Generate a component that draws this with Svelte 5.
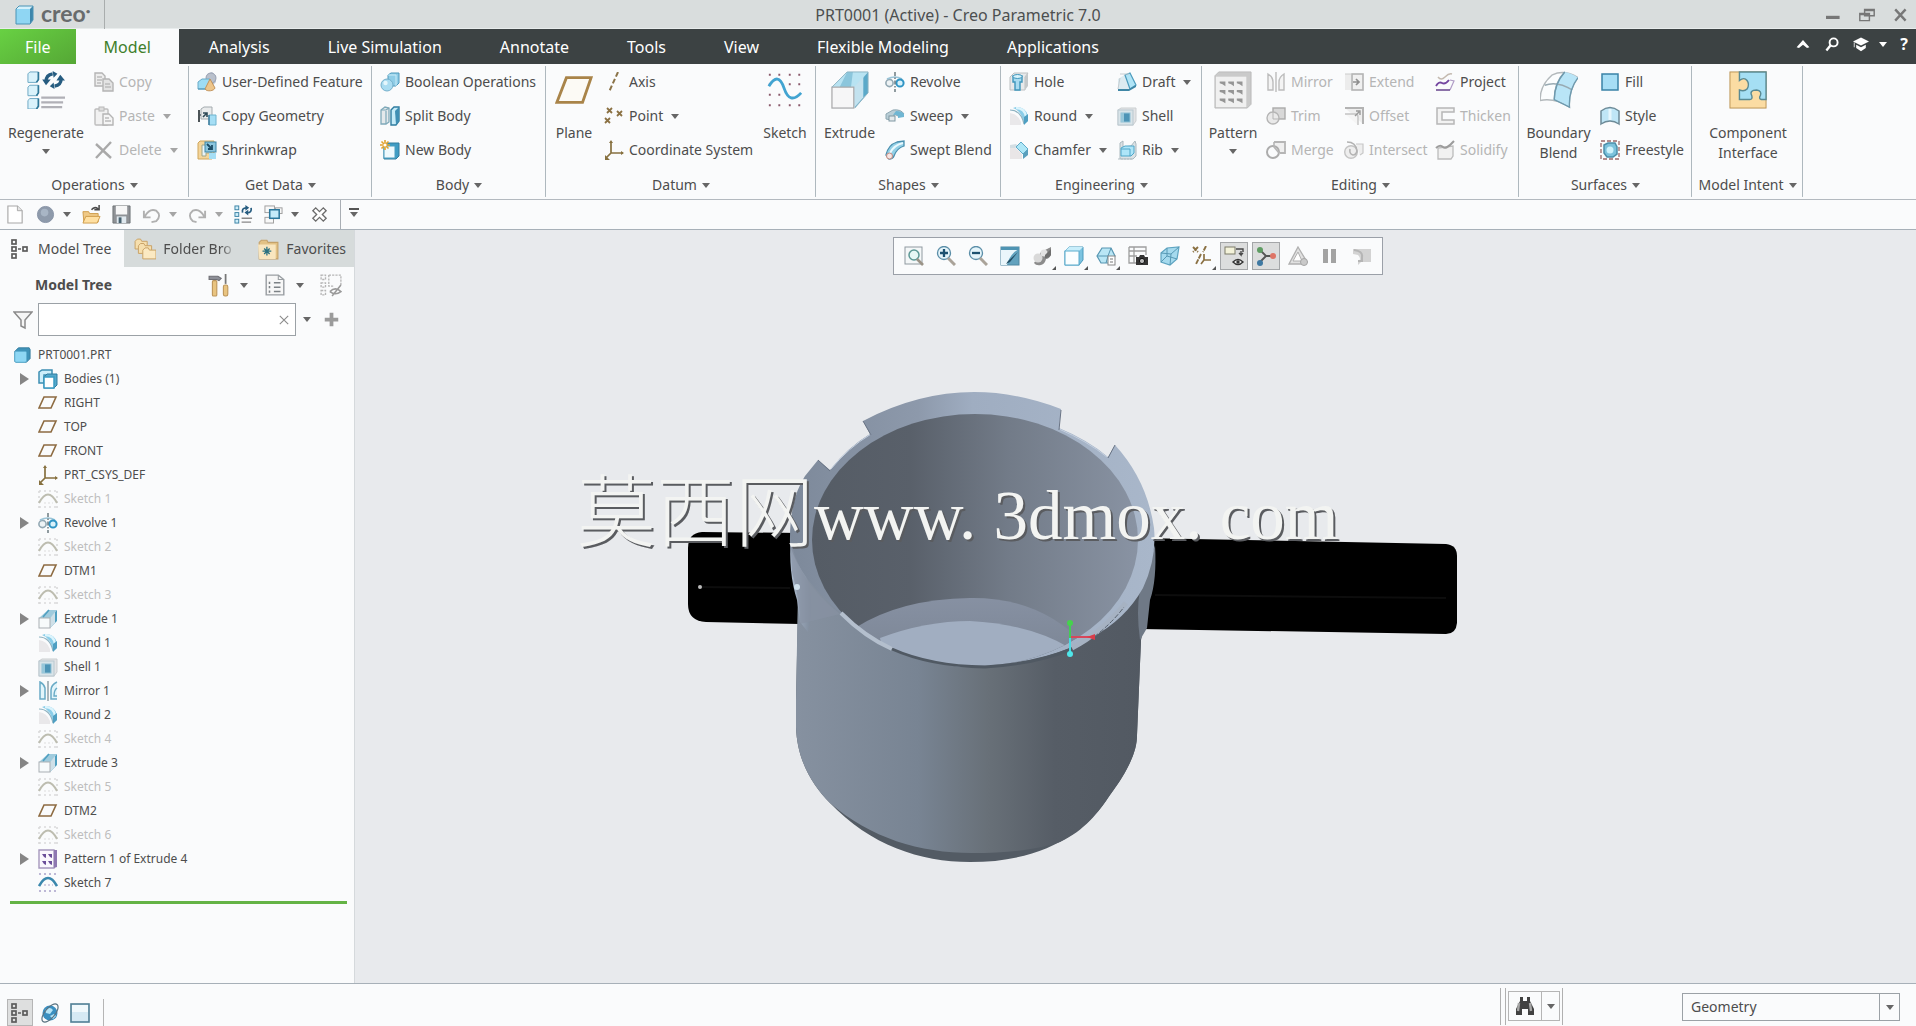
<script>
  const icons = {
    cube: '<path d="M2 4 5 1h14l-3 3z" fill="#d6f1fb"/><path d="M16 4l3-3v14l-3 4z" fill="#3d86ab"/><rect x="2" y="4" width="14" height="15" fill="#8fd6f3"/><path d="M2 4 5 1h14v14l-3 4H2z" fill="none" stroke="#4b93b5"/>',
    copy: '<g fill="#ededed" stroke="#b4b4b4" stroke-width="1.4"><path d="M1 1h7l3 3v10H1z"/><path d="M9 7h6l4 4v8H9z" fill="#e3e3e3"/></g><path d="M3 5h5M3 8h5M3 11h4M11 12h5M11 15h6" stroke="#bcbcbc" stroke-width="1.3"/>',
    paste: '<rect x="1" y="3" width="13" height="16" rx="1" fill="#f1f1f1" stroke="#bdbdbd" stroke-width="1.4"/><rect x="5" y="1" width="5" height="4" fill="#ddd" stroke="#b8b8b8"/><path d="M9 8h6l4 4v7H9z" fill="#f5f5f5" stroke="#b4b4b4" stroke-width="1.4"/><path d="M11 12h4M11 15h6" stroke="#bbb" stroke-width="1.3"/>',
    del: '<path d="M2 4l15 14M17 2L2 18" stroke="#a9a9a9" stroke-width="2.4" fill="none"/>',
    udf: '<path d="M9 9l1-7 5-2 4 4v6l-4 4z" fill="#b9c2d0"/><circle cx="14" cy="6" r="5" fill="#b9c0cc" stroke="#9aa2b3"/><path d="M1 10l4-3h8v7l-3 3H1z" fill="#9edcf3" stroke="#6aabc8"/><path d="M1 17h9l3-3" stroke="#4c93b4" fill="none"/><path d="M13 7l5 9c-1 3-8 4-10 1z" fill="#edc58a" stroke="#c2935a"/>',
    copyg: '<path d="M2 4v12M2 9h4" stroke="#4b5357" stroke-width="2" fill="none"/><path d="M4 3l3-2h8v9l-3 3H4z" fill="#e9ebec" stroke="#a4abaf"/><path d="M6 7h4v4M10 7l-4 4" stroke="#2f4a57" stroke-width="1.6" fill="none"/><path d="M12 9h7v10h-7z" fill="#a5def5" stroke="#6fb4cf"/><path d="M12 9v10" stroke="#3a7797" stroke-width="1.400"/>',
    shrink: '<path d="M1 3l2-2h14v16l-2 2H1z" fill="#f4d59a" stroke="#cfa65c"/><path d="M5 5h9v8H9v3H5z" fill="#eaf4f8" stroke="#a0a68a"/><rect x="8" y="2" width="11" height="10" fill="#8cc6de" stroke="#3f87a8"/><path d="M10 4l5 5m0-4v4h-4" stroke="#1d4d66" stroke-width="1.8" fill="none"/><path d="M12 13h7v6h-7z" fill="#a5def5"/>',
    bool: '<path d="M8 3l3-2h8v10l-3 3H8z" fill="#8fcde7" stroke="#4c97ba"/><path d="M8 3h8v11" fill="none" stroke="#c9ebf7"/><circle cx="7" cy="13" r="6" fill="#a9dcf1" stroke="#75b0cb"/><circle cx="5.500" cy="11" r="2.200" fill="#e4f6fc"/>',
    split: '<path d="M1 4l4-3 4 1v14l-3 2H1z" fill="#e4e9eb" stroke="#7fa9b9" stroke-width="1.3"/><path d="M6 5v13M1 4h5l3-2" fill="none" stroke="#7fa9b9" stroke-width="1.2"/><path d="M11 4l3-3h5v14l-3 4h-5z" fill="#c6ebf8" stroke="#2f7c9f" stroke-width="1.4"/><path d="M15 5l4-4v14l-3 4z" fill="#3f8fb4"/>',
    newb: '<path d="M4 5l3-2h12v13l-3 3H4z" fill="#3f9cc4" stroke="#327c9e"/><rect x="4" y="6" width="11" height="12" fill="#eef9fd" stroke="#4a9dc0"/><path d="M5 0v10M0 5h10M1.500 1.500l7 7M8.500 1.500l-7 7" stroke="#e3a32c" stroke-width="1.6"/><circle cx="5" cy="5" r="1.600" fill="#fff"/>',
    axis: '<path d="M14 0L5 20" stroke="#8b7348" stroke-width="2" stroke-dasharray="5 2.500" fill="none"/>',
    point: '<path d="M3 2l5 5M8 2L3 7M13 5l5 5M18 5l-5 5M1 12l5 5M6 12l-5 5" stroke="#8b7143" stroke-width="1.8" fill="none"/>',
    csys: '<path d="M7 2v11l-5 5M7 13h12" stroke="#86703f" stroke-width="1.7" fill="none"/><path d="M5 3l2-3 2 3zM17 11l3 2-3 2zM1 15v5h5z" fill="#86703f"/>',
    revolve: '<ellipse cx="4.500" cy="11" rx="3.600" ry="3.600" fill="#eef3f5" stroke="#93a8b3" stroke-width="1.6"/><path d="M2 7q8-4 15 0" stroke="#9cc5d8" stroke-width="1.6" fill="none"/><circle cx="15" cy="11" r="3.600" fill="#d9f2fb" stroke="#2f94c4" stroke-width="2"/><path d="M10 0v20" stroke="#58686f" stroke-width="1.3" stroke-dasharray="4 1.500 1.500 1.500"/>',
    sweep: '<path d="M1 8l7-4q8-1 11 4l-6 2q-3-2-4-1v5H6l-5-1z" fill="#b9ced7" stroke="#8da6b1"/><path d="M11 5q6 0 8 3v3l-6 1v-2q-1-2-5-1z" fill="#6fb6d3"/><rect x="4" y="10" width="6" height="5" fill="#e3e9ec" stroke="#7f97a2"/>',
    swept: '<path d="M1 15Q3 5 12 2l7-1v5q-7 2-10 10-1 3-5 3z" fill="#93d0e6" stroke="#4a8fae" stroke-width="1.3"/><path d="M5 13Q9 5 18 3" stroke="#e9f8fd" stroke-width="2" fill="none"/><circle cx="4.500" cy="16" r="3" fill="#f6e6e4" stroke="#c28a80"/>',
    hole: '<path d="M1 5l4-4h14l-3 4v13H1z" fill="#e7e9ea" stroke="#bcc0c2"/><path d="M16 5l3-4v13l-3 4z" fill="#c4c8ca"/><path d="M4 4h9v6h-2v8H6v-8H4z" fill="#a8dbf0" stroke="#3d95bb" stroke-width="1.4"/><ellipse cx="8.500" cy="4.500" rx="4.500" ry="2" fill="#d7f2fb" stroke="#3d95bb"/>',
    round: '<path d="M1 7q8 1 11 9v3H1z" fill="#e9e8ea"/><path d="M4 2l3-1q10 0 12 9v5l-4 3Q13 5 4 2z" fill="#8acde8"/><path d="M7 2q9 0 10 9" stroke="#dcf4fc" stroke-width="2.400" fill="none"/><path d="M1 4q11 0 14 14l1-7" fill="none" stroke="#8db2c1" stroke-width="1.200"/><path d="M15 11v8l4-4V8z" fill="#4f9fc2"/>',
    chamfer: '<path d="M1 8h6l6 6v5H1z" fill="#e9e6e7"/><path d="M1 5l6-1 2 2-3 2H1z" fill="#d3dee3"/><path d="M7 7l5-5 7 7-5 5z" fill="#aee7f7" stroke="#5fabc9"/><path d="M14 14l5-5v6l-5 4z" fill="#5a9fbd"/>',
    draft: '<path d="M1 7l8-5 4 15H1z" fill="#dcebf1"/><path d="M8 3l5-2 6 12-6 4z" fill="#b0e4f6" stroke="#4b9bbd" stroke-width="1.2"/><path d="M1 17h11l7-4v2l-7 4H1z" fill="#3f86a5"/><path d="M3 2h9M3 6q-1 5-2 11" fill="none" stroke="#c5ccd0"/>',
    shell: '<path d="M1 4l3-2h15v13l-3 4H1z" fill="#e3e4e6" stroke="#cbcfd1"/><rect x="1" y="4" width="15" height="15" fill="#d9e4e9" stroke="#b9c8cf"/><rect x="4" y="7" width="9" height="9" fill="#4d94b6" stroke="#8fc0d5"/><path d="M4 7h3v9H4z" fill="#97c7da"/>',
    rib: '<path d="M3 3l3-2v6l8-1 4-5 1 3v12l-3 3H3z" fill="#dbe2e5" stroke="#aab8be"/><path d="M4 8l4-2h9v7l-3 3H4z" fill="#aee5f8" stroke="#4ea6c9"/><path d="M4 9h9v7" stroke="#4ea6c9" fill="none"/><path d="M1 19h15" stroke="#b3bfc4" stroke-dasharray="2 1"/>',
    mirrorg: '<g fill="#f4f4f4" stroke="#bcbcbc" stroke-width="1.400"><path d="M2 18V2q5 3 5 8v8zM18 18V2q-5 3-5 8v8zM10 0v20"/></g>',
    mirror: '<g fill="#e3f5fb" stroke="#69abc6" stroke-width="1.500"><path d="M2 1q4 2 5 6v11H2zM19 1q-6 3-6 8v9h6"/></g><path d="M10 0v20" stroke="#81929a" stroke-width="1.300"/><path d="M19 7q-3 2-3 8h3" fill="none" stroke="#69abc6" stroke-width="1.400"/>',
    trim: '<rect x="7" y="2" width="12" height="11" fill="#d8d8d8" stroke="#ababab" stroke-width="1.400"/><circle cx="7" cy="12" r="6" fill="#e9e9e9" stroke="#b5b5b5" stroke-width="1.400"/><path d="M7 6v7h6" fill="none" stroke="#b5b5b5"/>',
    merge: '<path d="M8 2h11v11h-5" fill="#efefef" stroke="#b5b5b5" stroke-width="1.800"/><circle cx="7" cy="12" r="6" fill="none" stroke="#acacac" stroke-width="2"/><path d="M8 2v5l5 6" stroke="#b5b5b5" stroke-width="1.600" fill="none"/>',
    extend: '<rect x="1" y="2" width="6" height="16" fill="#ececec"/><path d="M1 2h6" stroke="#ccc"/><rect x="8" y="2" width="11" height="16" fill="#f0f0f0" stroke="#b3b3b3" stroke-width="1.600"/><path d="M9 10h6M12 7l3 3-3 3" stroke="#8e8e8e" stroke-width="1.700" fill="none"/>',
    offset: '<path d="M1 2h18v16" fill="#eee" stroke="#b3b3b3" stroke-width="2"/><path d="M1 8h10q3 0 3 3v8" fill="#f5f5f5" stroke="#c3c3c3" stroke-width="1.400"/><path d="M11 10l4-4M12 5h4v4" stroke="#999" stroke-width="1.400" fill="none"/>',
    intersect: '<path d="M12 4h7v9l-3 2" fill="#eee" stroke="#c8c8c8" stroke-width="1.200"/><circle cx="7" cy="12" r="6.300" fill="#eee" stroke="#c4c4c4" stroke-width="1.400"/><path d="M3 2q9 0 10 9-1 4-4 4-4-1-3-6" fill="none" stroke="#b3b3b3" stroke-width="1.600"/>',
    project: '<path d="M3 5q3 4 7 0t7-3" fill="none" stroke="#c4bab0" stroke-width="1.500"/><path d="M1 14q3-5 6-3t7-3" fill="none" stroke="#7446a0" stroke-width="1.900"/><path d="M15 18l4-9-4-1" fill="none" stroke="#b09cc6" stroke-width="1.200"/><path d="M1 18h14" stroke="#66438c" stroke-width="1.500"/>',
    thicken: '<path d="M19 2H2v16h17v-4H7V6h12z" fill="#f2f2f2" stroke="#b7b7b7" stroke-width="1.500"/>',
    solidify: '<path d="M3 8v11h13l2-3V6z" fill="#f1f1f1" stroke="#bcbcbc" stroke-width="1.300"/><path d="M1 8q4-4 7-1t11-6" fill="none" stroke="#9c9c9c" stroke-width="2"/>',
    fill: '<rect x="2" y="2" width="16" height="16" fill="#a7def5" stroke="#3a83a6" stroke-width="1.500"/>',
    style: '<path d="M1 5q9-7 18 0v13q-9-6-18 0z" fill="#bfe6f6" stroke="#6d8b98" stroke-width="1.500"/><path d="M10 3v11" stroke="#e6f7fd" stroke-width="3"/>',
    freestyle: '<rect x="1" y="1" width="18" height="18" fill="none" stroke="#9a6a6a" stroke-width="1.300" stroke-dasharray="4 2"/><path d="M4 5l4-2h7l2 4v7l-4 3H7l-3-4z" fill="#7cc2dc" stroke="#4b8ea9" stroke-width="1.500"/><circle cx="10" cy="10" r="3.500" fill="#ccf1fb"/>',
    plane: '<path d="M6 4h12l-5 11H1z" fill="none" stroke="#8d6b41" stroke-width="1.600"/>',
    sk: '<g stroke="#dadada" stroke-width="1.600" stroke-dasharray="2 3"><path d="M1 2h18M1 18h18M1 2v17M19 2v17"/></g><path d="M1 14Q10-3 19 14" fill="none" stroke="#bdbdb0" stroke-width="2"/><path d="M6 14h9" stroke="#ddd" stroke-dasharray="2 2"/>',
    skon: '<g stroke="#a9a3c9" stroke-width="1.500" stroke-dasharray="2 3"><path d="M1 1h18M1 18h18"/></g><path d="M1 13Q10-3 19 13" fill="none" stroke="#3b88ad" stroke-width="2.600"/><path d="M6 12h9" stroke="#a9a3c9" stroke-dasharray="2 2"/>',
    extr: '<path d="M1 9l9-8h9l-7 8z" fill="#9fcbdd"/><path d="M12 9l7-8v11l-7 7z" fill="#4f9fc0"/><path d="M12 19V9l5-6v11z" fill="#cfe0e8"/><rect x="1" y="9" width="11" height="10" fill="#f7fafb" stroke="#a9afb3"/><path d="M11 1L5 8" stroke="#4f9fc0" stroke-width="1.500"/>',
    bodies: '<path d="M1 3l3-2h10v5H6v8H1z" fill="#cdeefa" stroke="#3c8fb3" stroke-width="1.500"/><path d="M6 8l3-3h10v11l-3 3H6z" fill="#54a8cb" stroke="#2e7c9f"/><rect x="6" y="8" width="10" height="11" fill="#fff" stroke="#3a9ac2" stroke-width="1.500"/>',
    patt: '<path d="M1 1h15v18H1z" fill="#faf8fd" stroke="#a598bd" stroke-width="1.400"/><path d="M16 1h3v17l-3 1z" fill="#8e78b1"/><path d="M4 5h4v4L6 8zM10 5h4v4l-2-1zM4 12h4v4l-2-1zM10 12h4v4l-2-1z" fill="#6b4f99"/>',
    part: '<path d="M2 6l4-4h12l1 2v10l-4 4H3l-1-1z" fill="#3f93b9" stroke="#357d9e"/><rect x="2" y="6" width="13" height="12" rx="1.500" fill="#8ed7f4" stroke="#5fb0d2"/>',
    tree: '<g fill="none" stroke="#5c5c5c" stroke-width="1.700"><rect x="2" y="1" width="4" height="4"/><rect x="2" y="8" width="4" height="4"/><rect x="2" y="15" width="4" height="4"/><rect x="13" y="8" width="4" height="4"/></g><path d="M8 10h3" stroke="#5c5c5c" stroke-width="1.500"/>',
    folders: '<g fill="#f6dfae" stroke="#c9a367" stroke-width=".9"><path d="M1 3l2-2h3l1 2h5v7H1z"/><path d="M4 7l2-2h3l1 2h6v7H4z"/><path d="M8 11l2-2h3l1 2h6v8H8z" fill="#fbe9c2"/></g>',
    fav: '<path d="M2 4l2-2h5l1 2h9v15H2z" fill="#e3c285" stroke="#c5a26a"/><path d="M1 6h16v13H2z" fill="#f9e6bf"/><path d="M9 8v8M5 12h8M6.500 9.500l5 5M11.500 9.500l-5 5" stroke="#2a7180" stroke-width="1.200"/>',
    hammer: '<path d="M1 2h8l3 2-2 2-2-1H1z" fill="#8d8f97" stroke="#6f6f75"/><rect x="4" y="6" width="4" height="14" rx="1" fill="#e9c480" stroke="#bd965a"/><path d="M16 0v9" stroke="#777" stroke-width="1.600"/><rect x="14" y="10" width="4" height="10" rx="1.500" fill="#e9c480" stroke="#bd965a"/>',
    list: '<path d="M2 1h11l5 4v14H2z" fill="#f7f7f7" stroke="#9a9fa3" stroke-width="1.300"/><path d="M13 1v4h5" fill="none" stroke="#9a9fa3"/><path d="M9 8h6M9 12h6M9 16h6M5 7v2M5 11v2M5 15v2" stroke="#7d8286" stroke-width="1.400"/>',
    hide: '<g fill="none" stroke="#b5b5b5" stroke-width="1.200"><path d="M1 1h4v4H1zM1 8h4v4H1zM1 15h4v4H1zM8 1h11v10" stroke-dasharray="2 1"/><path d="M8 1v10h5" stroke-dasharray="2 1"/><path d="M9 16q5-5 10 0-5 4-10 0M19 10L11 20" stroke="#999" stroke-width="1.400"/></g>',
    funnel: '<path d="M1 2h18l-7 8v8l-4-2v-6z" fill="#f5f5f5" stroke="#8a8a8a" stroke-width="1.500"/>',
    page: '<path d="M2 1h10l5 5v13H2z" fill="#fff" stroke="#a8a8a8" stroke-width="1.200"/><path d="M12 1v5h5" fill="#e6e6e6" stroke="#a8a8a8"/>',
    sphere: '<circle cx="10" cy="10" r="8.500" fill="#8e9aab" stroke="#8894a6"/><circle cx="9" cy="8" r="4" fill="#a8b5c5"/>',
    open: '<path d="M1 7h6l1 2h9v9H2z" fill="#efc987" stroke="#cf9c4b"/><path d="M4 12h15l-3 7H1z" fill="#ffe0a2" stroke="#cf9c4b"/><path d="M10 5q3-4 7-1M18 0v5h-5" fill="none" stroke="#4a4a4a" stroke-width="1.600"/>',
    save: '<path d="M1 1h18v18H1z" fill="#8f9296" stroke="#6f7377"/><rect x="4" y="1" width="12" height="9" fill="#f6f6f6"/><rect x="5" y="12" width="10" height="7" fill="#dfe8ee"/><rect x="7" y="13" width="3" height="6" fill="#47616f"/>',
    undo: '<path d="M2 6v7h7M3 12Q8 3 15 6q6 5 0 11l-5 1" fill="none" stroke="#b0b0b0" stroke-width="2"/>',
    redo: '<path d="M18 6v7h-7M17 12Q12 3 5 6q-6 5 0 11l4 1" fill="none" stroke="#b0b0b0" stroke-width="2"/>',
    regen: '<g fill="#cfeefa" stroke="#3a82a4"><rect x="1" y="1" width="4" height="4"/><rect x="1" y="8" width="4" height="4"/><rect x="1" y="15" width="4" height="4"/></g><path d="M8 14h11M8 18h10" stroke="#888" stroke-width="1.500"/><path d="M9 8q-1-5 4-5M18 3q1 5-4 5" stroke="#265c80" stroke-width="1.800" fill="none"/><path d="M12 0l4 3-4 3zM15 11l-4-3 4-3z" fill="#265c80"/>',
    windows: '<g fill="#f8f8f8" stroke="#9d9d9d"><rect x="1" y="1" width="10" height="7"/><rect x="12" y="3" width="7" height="6"/><rect x="1" y="13" width="9" height="6"/></g><rect x="6" y="5" width="10" height="9" fill="#c5ebf9" stroke="#2b779c" stroke-width="1.600"/>',
    closex: '<path d="M10 7l4-4 3 3-4 4 4 4-3 3-4-4-4 4-3-3 4-4-4-4 3-3z" fill="#fff" stroke="#6c6c6c" stroke-width="1.400"/>',
    refit: '<rect x="1" y="1" width="17" height="17" fill="#f4f7f8" stroke="#909aa0"/><circle cx="10" cy="9" r="5" fill="#e6f7f5" stroke="#5c9895" stroke-width="1.500"/><path d="M13 13l6 6" stroke="#9b9387" stroke-width="2.600"/>',
    zin: '<circle cx="8" cy="7" r="6.500" fill="#e4f4fa" stroke="#5b8ea8" stroke-width="1.300"/><path d="M12 12l7 7" stroke="#aaa399" stroke-width="3"/><path d="M4 7h8M8 3v8" stroke="#1c5170" stroke-width="2.300"/>',
    zout: '<circle cx="8" cy="7" r="6.500" fill="#e4f4fa" stroke="#5b8ea8" stroke-width="1.300"/><path d="M12 12l7 7" stroke="#aaa399" stroke-width="3"/><path d="M4 7h8" stroke="#1c5170" stroke-width="2.300"/>',
    repaint: '<rect x="1" y="1" width="18" height="18" fill="#62a2be" stroke="#4f88a2"/><path d="M1 3h18Q10 7 7 19H1z" fill="#eaf6fb"/><path d="M1 1h18v3H1z" fill="#4f94b3"/><path d="M18 6L8 15l-2 3 4-2z" fill="#234f66"/>',
    shade: '<path d="M9 6l10-5v8q-2 4-5 4-1 5-5 6-5 1-7-2z" fill="#8c8c8c"/><circle cx="6" cy="12" r="4.500" fill="#d9d9d9"/><circle cx="12" cy="7" r="3.500" fill="#e3e3e3"/><path d="M13 9l6-6v6q-3 4-6 3z" fill="#6f6f6f"/>',
    box: '<path d="M1 5l4-4h14v13l-4 5H1z" fill="#7cc3e0" stroke="#4a9abd"/><path d="M1 5l4-4h14l-4 4z" fill="#c8eefb"/><rect x="1" y="5" width="14" height="14" fill="#fbfeff" stroke="#5baccd"/>',
    saved: '<path d="M1 10l5-8h9l4 8-5 7H5z" fill="#b9e6f5" stroke="#5796b2" stroke-width="1.200"/><path d="M1 10h11l3-8M12 10l-2 7" fill="none" stroke="#5796b2"/><rect x="12" y="10" width="7" height="9" fill="#fff" stroke="#888"/><path d="M14 13h3M14 16h3" stroke="#777"/>',
    camera: '<path d="M1 1h17v8M1 1v16h8M1 5h17M1 10h8M6 1v16" fill="none" stroke="#9e9e9e" stroke-width="1.300"/><path d="M8 11h3l1-2h4l1 2h3v8H8z" fill="#343434"/><circle cx="14" cy="15" r="2.600" fill="#bbb" stroke="#111"/>',
    persp: '<path d="M1 7l6-5 12-1-2 12-7 6-9-3z" fill="#a5daee" stroke="#5ea4c1" stroke-width="1.200"/><path d="M1 7l10 1 8-7M11 8l-1 11M7 2v8l-6 6M7 10l10 3" fill="none" stroke="#5799b5"/>',
    datums: '<path d="M1 1l5 5M6 1L1 6M14 0l-3 6M9 8l-5 10" stroke="#8b7143" stroke-width="1.900" fill="none" stroke-dasharray="5 1"/><path d="M12 8v6l-3 4M12 14h7" stroke="#8b7143" stroke-width="1.700" fill="none"/>',
    annot: '<rect x="1" y="1" width="10" height="7" fill="#f4f3da" stroke="#7c7c6a"/><path d="M12 3h7v3M17 5v4l-2-2m4 0l-2 2" fill="none" stroke="#484848" stroke-width="1.400"/><path d="M9 16q5-5 10 0-5 5-10 0z" fill="#eee" stroke="#333" stroke-width="1.400"/><circle cx="14" cy="16" r="1.700" fill="#333"/>',
    spin: '<path d="M4 4l6 6h7M10 10l-6 6" stroke="#555" stroke-width="1.800" fill="none"/><circle cx="4" cy="4" r="3" fill="#5f9c63"/><circle cx="17" cy="10" r="3" fill="#de7466"/><circle cx="4" cy="17" r="3" fill="#3f79a2"/>',
    sim: '<path d="M10 1l9 15-2 2H1z" fill="#e1e1e1" stroke="#b0b0b0" stroke-width="1.300"/><path d="M10 6l4 9H5z" fill="#fff" stroke="#b0b0b0"/><circle cx="16" cy="16" r="3.500" fill="#c9c9c9" stroke="#a5a5a5"/>',
    pause: '<path d="M3 3h5v14H3zM11 3h5v14h-5z" fill="#a3a3a3"/>',
    resume: '<path d="M1 3h18v13H9l-3 3v-3q4-3 0-7l-5-1z" fill="#d3d3d3"/><path d="M2 4q9 1 8 7v4H6" fill="none" stroke="#b5b5b5" stroke-width="2"/>',
    globe: '<circle cx="10" cy="10" r="7.500" fill="#3a8fc0"/><path d="M5 7q5-4 8 0l-3 4-4-1zM10 13l4-2 2 2-3 3z" fill="#b5e3f5"/><ellipse cx="10" cy="10" rx="11" ry="5" transform="rotate(-50 10 10)" fill="none" stroke="#5a7280" stroke-width="1.200"/>',
    panel: '<rect x="1" y="1" width="18" height="18" fill="#d6eaf4" stroke="#517f95" stroke-width="1.600"/><rect x="2" y="2" width="16" height="7" fill="#f1f9fc"/>',
    binoc: '<path d="M5 1h3v4h4V1h3v4l4 8v6h-6v-6H7v6H1v-6l4-8z" fill="#414141"/><path d="M4 7l-1 8M15 7l1 8" stroke="#a6a6a6" stroke-width="2.400"/>',
    up: '<path d="M2 14l8-9 8 9-3 1-5-4-5 4z" fill="#fff"/>',
    search: '<circle cx="12" cy="8" r="5" fill="none" stroke="#fff" stroke-width="2.400"/><path d="M8 12l-5 6" stroke="#fff" stroke-width="3"/>',
    cap: '<path d="M10 2l10 5-10 5L0 7z" fill="#fff"/><path d="M4 11l6 3 6-3v4l-6 4-6-4zM1 8v6h1V8z" fill="#fff"/>',
    min: '<path d="M0 11h17v4H0z" fill="#777"/>',
    restore: '<path d="M7 3h12v8H7zM1 8h12v9H1z" fill="#d9dddd" stroke="#777" stroke-width="1.800"/><path d="M7 4h12M1 9h12" stroke="#777" stroke-width="2.500"/>',
    close: '<path d="M4 3l13 14M17 3L4 17" stroke="#777" stroke-width="3"/>',
    plus: '<path d="M10 1v18M1 10h18" stroke="#9b9b9b" stroke-width="5"/>',
    clear: '<path d="M4 4l12 12M16 4L4 16" stroke="#8c8c8c" stroke-width="1.600"/>'
  };

  const big = {
    regen: '<g fill="#d9f2fb" stroke="#6aa6c2"><path d="M1 3l2-2h9v8l-2 3H1z"/><path d="M1 17l2-2h9v8l-2 3H1z"/><path d="M1 31l2-2h9v8l-2 3H1z"/></g><path d="M12 1v8l-2 3M12 15v8l-2 3M12 29v8l-2 3" stroke="#2f7899" stroke-width="1.800" fill="none"/><path d="M15 28h25M15 33h23M15 38h22" stroke="#b0b0b6" stroke-width="2.400"/><path d="M20 11q0-7 7-8M36 8q0 7-7 8" fill="none" stroke="#265c80" stroke-width="3.400"/><path d="M16 9h9l-5 6zM27 0l5 3-4 4zM31 10h9l-5-6zM29 19l-5-3 4-4z" fill="#265c80"/>',
    plane: '<path d="M12 7h26L29 33H2z" fill="#fcfaf5" stroke="#a98449" stroke-width="3"/>',
    sketch: '<g fill="#8b5a6b"><path d="M3 3h2v2H3zM13 3h2v2h-2zM24 3h2v2h-2zM34 3h2v2h-2zM3 13h2v2H3zM34 13h2v2h-2zM24 13h2v2h-2zM3 24h2v2H3zM13 24h2v2h-2zM3 35h2v2H3zM13 35h2v2h-2zM24 35h2v2h-2zM34 35h2v2h-2z"/></g><path d="M3 16Q13 0 19 18T37 23" fill="none" stroke="#42a4d1" stroke-width="3"/>',
    extrude: '<path d="M1 17L17 1h22L25 17z" fill="#b8e3f2"/><path d="M9 17L17 1h6l-2 16z" fill="#8bc6dc"/><path d="M25 17L39 1v22L25 39z" fill="#5ba9c9"/><path d="M24 39V17l10-11v22z" fill="#c3e2ef"/><rect x="1" y="17" width="23" height="22" fill="#f6f6f7" stroke="#a9a9ab" stroke-width="1.300"/><path d="M1 17L17 1h22v22L25 39" fill="none" stroke="#8ab2c2"/>',
    pattern: '<path d="M1 5l4-4h34v34l-4 4H1z" fill="#cacaca" stroke="#bababa"/><rect x="2" y="6" width="32" height="32" fill="#f0f0f0"/><g fill="#959595"><path d="M6 11h6v5l-3-2-3-1zM15 11h6v5l-3-2-3-1zM24 11h6v5l-3-2-3-1zM6 20h6v5l-3-2-3-1zM15 20h6v5l-3-2-3-1zM24 20h6v5l-3-2-3-1zM6 29h6v5l-3-2-3-1zM15 29h6v5l-3-2-3-1zM24 29h6v5l-3-2-3-1z"/></g>',
    boundary: '<path d="M13 4Q26-2 40 7 30 20 31 38 16 28 0 31 0 15 13 4z" fill="#fbfdfe" stroke="#b3b9bc" stroke-width="1.500"/><path d="M26 1q7 1 14 6-11 12-9 31-7-5-16-8 0-18 11-29z" fill="#b9e5f7"/><path d="M26 1q-11 11-11 29M5 15q13-5 29 5" fill="none" stroke="#98aab2" stroke-width="1.500"/><path d="M40 7Q30 20 31 38l-16-8Q15 14 26 1" fill="none" stroke="#6d9aaf" stroke-width="1.400"/>',
    puzzle: '<rect x="1" y="1" width="38" height="38" fill="#fbdca3" stroke="#b99152"/><path d="M11 1h28v29h-5q-3-1-1-4 2-5-4-6-8 0-5 6 1 4-2 4H11V20q5 2 8-1 3-5 0-9-3-4-8 0z" fill="#a5dff4" stroke="#5a8a93" stroke-width="1.500"/>'
  };

  const groups = [
    { id: 'operations', name: 'Operations', cols: [
      { big: 'regen', lines: ['Regenerate'], arrow: true },
      [{ i: 'copy', t: 'Copy', off: true }, { i: 'paste', t: 'Paste', a: true, off: true }, { i: 'del', t: 'Delete', a: true, off: true }]] },
    { id: 'getdata', name: 'Get Data', cols: [
      [{ i: 'udf', t: 'User-Defined Feature' }, { i: 'copyg', t: 'Copy Geometry' }, { i: 'shrink', t: 'Shrinkwrap' }]] },
    { id: 'body', name: 'Body', cols: [
      [{ i: 'bool', t: 'Boolean Operations' }, { i: 'split', t: 'Split Body' }, { i: 'newb', t: 'New Body' }]] },
    { id: 'datum', name: 'Datum', cols: [
      { big: 'plane', lines: ['Plane'] },
      [{ i: 'axis', t: 'Axis' }, { i: 'point', t: 'Point', a: true }, { i: 'csys', t: 'Coordinate System' }],
      { big: 'sketch', lines: ['Sketch'] }] },
    { id: 'shapes', name: 'Shapes', cols: [
      { big: 'extrude', lines: ['Extrude'] },
      [{ i: 'revolve', t: 'Revolve' }, { i: 'sweep', t: 'Sweep', a: true }, { i: 'swept', t: 'Swept Blend' }]] },
    { id: 'engineering', name: 'Engineering', cols: [
      [{ i: 'hole', t: 'Hole' }, { i: 'round', t: 'Round', a: true }, { i: 'chamfer', t: 'Chamfer', a: true }],
      [{ i: 'draft', t: 'Draft', a: true }, { i: 'shell', t: 'Shell' }, { i: 'rib', t: 'Rib', a: true }]] },
    { id: 'editing', name: 'Editing', cols: [
      { big: 'pattern', lines: ['Pattern'], arrow: true },
      [{ i: 'mirrorg', t: 'Mirror', off: true }, { i: 'trim', t: 'Trim', off: true }, { i: 'merge', t: 'Merge', off: true }],
      [{ i: 'extend', t: 'Extend', off: true }, { i: 'offset', t: 'Offset', off: true }, { i: 'intersect', t: 'Intersect', off: true }],
      [{ i: 'project', t: 'Project' }, { i: 'thicken', t: 'Thicken', off: true }, { i: 'solidify', t: 'Solidify', off: true }]] },
    { id: 'surfaces', name: 'Surfaces', cols: [
      { big: 'boundary', lines: ['Boundary', 'Blend'] },
      [{ i: 'fill', t: 'Fill' }, { i: 'style', t: 'Style' }, { i: 'freestyle', t: 'Freestyle' }]] },
    { id: 'intent', name: 'Model Intent', cols: [{ big: 'puzzle', lines: ['Component', 'Interface'] }] }
  ];

  const tabs = ['Analysis', 'Live Simulation', 'Annotate', 'Tools', 'View', 'Flexible Modeling', 'Applications'];

  const tree = [
    { i: 'bodies', t: 'Bodies (1)', x: true },
    { i: 'plane', t: 'RIGHT' }, { i: 'plane', t: 'TOP' }, { i: 'plane', t: 'FRONT' },
    { i: 'csys', t: 'PRT_CSYS_DEF' },
    { i: 'sk', t: 'Sketch 1', off: true },
    { i: 'revolve', t: 'Revolve 1', x: true },
    { i: 'sk', t: 'Sketch 2', off: true },
    { i: 'plane', t: 'DTM1' },
    { i: 'sk', t: 'Sketch 3', off: true },
    { i: 'extr', t: 'Extrude 1', x: true },
    { i: 'round', t: 'Round 1' }, { i: 'shell', t: 'Shell 1' },
    { i: 'mirror', t: 'Mirror 1', x: true },
    { i: 'round', t: 'Round 2' },
    { i: 'sk', t: 'Sketch 4', off: true },
    { i: 'extr', t: 'Extrude 3', x: true },
    { i: 'sk', t: 'Sketch 5', off: true },
    { i: 'plane', t: 'DTM2' },
    { i: 'sk', t: 'Sketch 6', off: true },
    { i: 'patt', t: 'Pattern 1 of Extrude 4', x: true },
    { i: 'skon', t: 'Sketch 7' }
  ];

  const viewTools = [
    { i: 'refit', t: 'Refit' }, { i: 'zin', t: 'Zoom In' }, { i: 'zout', t: 'Zoom Out' },
    { i: 'repaint', t: 'Repaint' }, { i: 'shade', t: 'Rendering Options', m: true },
    { i: 'box', t: 'Display Style', m: true }, { i: 'saved', t: 'Saved Orientations', m: true },
    { i: 'camera', t: 'View Manager' }, { i: 'persp', t: 'Perspective View' },
    { i: 'datums', t: 'Datum Display Filters', m: true },
    { i: 'annot', t: 'Annotation Display', on: true }, { i: 'spin', t: 'Spin Center', on: true },
    { i: 'sim', t: 'Simulation', off: true }, { i: 'pause', t: 'Pause', off: true }, { i: 'resume', t: 'Resume', off: true }
  ];

  let filter = $state('');
  let selection = $state('Geometry');
</script>

{#snippet icon(name)}
  <svg class="icon" viewBox="0 0 20 20" aria-hidden="true">{@html icons[name]}</svg>
{/snippet}

<div class="app">
  <header class="title">
    <div class="brand">{@render icon('cube')}<span>creo</span><sup>•</sup></div>
    <h1>PRT0001 (Active) - Creo Parametric 7.0</h1>
    <div class="winctl">
      <button aria-label="Minimize">{@render icon('min')}</button>
      <button aria-label="Restore">{@render icon('restore')}</button>
      <button aria-label="Close">{@render icon('close')}</button>
    </div>
  </header>

  <nav class="menu">
    <button class="file">File</button>
    <button class="current">Model</button>
    {#each tabs as t}<button>{t}</button>{/each}
    <div class="help">
      <button aria-label="Minimize the ribbon">{@render icon('up')}</button>
      <button aria-label="Search">{@render icon('search')}</button>
      <button aria-label="Learning">{@render icon('cap')}<span class="arrow"></span></button>
      <button class="q">?</button>
    </div>
  </nav>

  <div class="ribbon">
    {#each groups as g}
      <section class="group {g.id}">
        <div class="cols">
          {#each g.cols as c}
            {#if c.big}
              <button class="bigbtn">
                <svg viewBox="0 0 40 40" aria-hidden="true">{@html big[c.big]}</svg>
                {#each c.lines as l}<span>{l}</span>{/each}
                {#if c.arrow}<i class="arrow"></i>{/if}
              </button>
            {:else}
              <div class="col">
                {#each c as b}
                  <button class="cmd" disabled={b.off}>{@render icon(b.i)}<span>{b.t}</span>{#if b.a}<i class="arrow"></i>{/if}</button>
                {/each}
              </div>
            {/if}
          {/each}
        </div>
        <button class="gname">{g.name}<i class="arrow"></i></button>
      </section>
    {/each}
  </div>

  <div class="quick">
    <button aria-label="New">{@render icon('page')}</button>
    <button class="drop" aria-label="Appearance">{@render icon('sphere')}<i class="arrow"></i></button>
    <button aria-label="Open">{@render icon('open')}</button>
    <button aria-label="Save">{@render icon('save')}</button>
    <button class="drop" aria-label="Undo" disabled>{@render icon('undo')}<i class="arrow"></i></button>
    <button class="drop" aria-label="Redo" disabled>{@render icon('redo')}<i class="arrow"></i></button>
    <button aria-label="Regenerate">{@render icon('regen')}</button>
    <button class="drop" aria-label="Windows">{@render icon('windows')}<i class="arrow"></i></button>
    <button aria-label="Close window">{@render icon('closex')}</button>
    <button class="more" aria-label="Customize"><i class="arrow"></i></button>
  </div>

  <div class="main">
    <aside>
      <div class="sidetabs">
        <button class="on">{@render icon('tree')}<span>Model Tree</span></button>
        <button class="folder">{@render icon('folders')}<span class="fade">Folder Bro</span></button>
        <button>{@render icon('fav')}<span>Favorites</span></button>
      </div>
      <div class="sidehead">
        <h2>Model Tree</h2>
        <button aria-label="Settings">{@render icon('hammer')}<i class="arrow"></i></button>
        <button aria-label="Show">{@render icon('list')}<i class="arrow"></i></button>
        <button aria-label="Hide">{@render icon('hide')}</button>
      </div>
      <div class="filter">
        {@render icon('funnel')}
        <div class="field">
          <input type="text" aria-label="Filter tree" bind:value={filter} />
          <button aria-label="Clear" onclick={() => (filter = '')}>{@render icon('clear')}</button>
        </div>
        <button aria-label="Filter options"><i class="arrow"></i></button>
        <button class="add" aria-label="Add">{@render icon('plus')}</button>
      </div>
      <ul>
        <li class="root">{@render icon('part')}<span>PRT0001.PRT</span></li>
        {#each tree as n}
          <li class:off={n.off}>
            {#if n.x}<button class="exp" aria-label="Expand {n.t}"></button>{:else}<b class="noexp"></b>{/if}
            {@render icon(n.i)}<span>{n.t}</span>
          </li>
        {/each}
      </ul>
      <hr />
    </aside>

    <main>
      <div class="viewbar">
        {#each viewTools as v}
          <button class:on={v.on} class:menu-mark={v.m} disabled={v.off} aria-label={v.t}>{@render icon(v.i)}</button>
        {/each}
      </div>
      <svg class="scene" viewBox="355 275 1561 708" role="img" aria-label="Cup model with two handles">
        <defs>
          <linearGradient id="wall" gradientUnits="userSpaceOnUse" x1="796" y1="0" x2="1145" y2="0">
            <stop offset="0" stop-color="#8691a0" /><stop offset=".35" stop-color="#788493" />
            <stop offset=".55" stop-color="#687078" /><stop offset=".74" stop-color="#565d66" /><stop offset="1" stop-color="#525962" />
          </linearGradient>
          <linearGradient id="inside" gradientUnits="userSpaceOnUse" x1="813" y1="0" x2="1138" y2="0">
            <stop offset="0" stop-color="#555c65" /><stop offset=".3" stop-color="#59606a" />
            <stop offset=".6" stop-color="#727b88" /><stop offset="1" stop-color="#8993a3" />
          </linearGradient>
          <linearGradient id="rim" gradientUnits="userSpaceOnUse" x1="790" y1="0" x2="1155" y2="0">
            <stop offset="0" stop-color="#7d899a" /><stop offset=".35" stop-color="#8d99ab" />
            <stop offset=".5" stop-color="#9fadc1" /><stop offset="1" stop-color="#a9b7ca" />
          </linearGradient>
          <linearGradient id="base" gradientUnits="userSpaceOnUse" x1="0" y1="595" x2="0" y2="640">
            <stop offset="0" stop-color="#8791a3" /><stop offset="1" stop-color="#7f8999" />
          </linearGradient>
          <linearGradient id="boss" gradientUnits="userSpaceOnUse" x1="788" y1="0" x2="812" y2="0">
            <stop offset="0" stop-color="#b0bfd3" /><stop offset="1" stop-color="#7d8999" />
          </linearGradient>
          <clipPath id="mouth"><ellipse cx="975" cy="540" rx="163" ry="126" /></clipPath>
        </defs>
        <path d="M702 532L800 533V624L706 622Q688 621 688 604V548Q688 533 702 532z" fill="#000" />
        <path d="M1140 538L1446 544Q1457 545 1457 556V623Q1456 634 1446 634L1140 629z" fill="#000" />
        <path d="M1155 595L1446 598" stroke="#0d0d0d" stroke-width="2" />
        <path d="M700 587L790 588" stroke="#0d0d0d" stroke-width="2" />
        <path d="M798 610L796 700V727C797 760 812 785 830 803C870 845 920 862 970 862C1040 862 1085 835 1110 795C1130 768 1137 750 1137 735L1141 640L1147 600V540H798z" fill="#535b64" />
        <path d="M798 590L796 700V727C797 760 812 785 830 803C870 838 920 853 972 853C1010 853 1040 849 1060 842C1085 830 1098 813 1110 795C1130 768 1137 750 1137 735L1141 640L1147 600V540H798z" fill="url(#wall)" />
        <path d="M1155 545Q1157 580 1150 600L1147 628L1140 640Q1136 610 1140 590z" fill="#6f7986" />
        <path d="M791 536Q788 572 797 600L800 622L808 632Q816 600 804 570L800 540z" fill="url(#boss)" />
        <path d="M863 421Q960 370 1061 409L1059 428Q1088 440 1108 457L1115 445Q1147 480 1154 528Q1157 558 1143 588Q1125 620 1092 637Q1040 667 960 667Q890 655 842 614Q800 580 790 545Q789 500 805 476L818 460L830 470Q848 447 870 434z" fill="url(#rim)" />
        <path d="M790 535Q796 580 840 614L800 624Q800 600 792 572z" fill="#8791a2" opacity=".7" />
        <path d="M831 469Q848 448 871 434M1059 429Q1087 441 1107 457" fill="none" stroke="#c3cfdf" stroke-width="1" />
        <path d="M1061 410L1059 430M863 421L871 435M830 471L818 460M1108 458L1115 445" stroke="#687384" fill="none" />
        <ellipse cx="975" cy="540" rx="163" ry="126" fill="url(#inside)" />
        <g clip-path="url(#mouth)">
          <path d="M855 628Q900 599 970 598T1085 645L1100 680H850z" fill="url(#base)" />
          <path d="M880 638Q925 621 970 621Q1030 624 1070 648L1060 680H890z" fill="#a1aec1" />
        </g>
        <path d="M841 613Q865 637 892 649" stroke="#b4bfcd" stroke-width="4" fill="none" />
        <path d="M892 649Q930 666 985 667Q1035 664 1072 649" stroke="#505963" stroke-width="3" fill="none" />
        <path d="M1072 648Q1100 634 1126 603" stroke="#a6b2c2" stroke-width="5" fill="none" />
        <path d="M1094 637Q1112 623 1124 607" stroke="#56606c" stroke-width="1" stroke-dasharray="5 2" fill="none" />
        <circle cx="700" cy="587" r="2" fill="#bbb" /><circle cx="797" cy="587" r="3" fill="#cfe0ec" />
        <path d="M1070 622V640" stroke="#43cc55" stroke-width="2" /><path d="M1070 638V654" stroke="#49dbe2" stroke-width="2" />
        <path d="M1071 637H1092" stroke="#d8475b" stroke-width="2" />
        <circle cx="1070" cy="623" r="3" fill="#45d24c" /><circle cx="1070" cy="654" r="3" fill="#4fe6e9" /><path d="M1087 637l8-3v6z" fill="#d93c49" />
        <text class="mark cjk" x="577" y="541">莫西网</text>
        <text class="mark" x="814" y="539">www. 3dmox. com</text>
      </svg>
    </main>
  </div>

  <footer>
    <button class="st on" aria-label="Model tree">{@render icon('tree')}</button>
    <button class="st" aria-label="Browser">{@render icon('globe')}</button>
    <button class="st" aria-label="Full screen">{@render icon('panel')}</button>
    <span class="bar"></span>
    <span class="grip"></span>
    <div class="find">
      <button aria-label="Find">{@render icon('binoc')}</button>
      <button class="fa" aria-label="Find options"><i class="arrow"></i></button>
    </div>
    <label class="sel">
      <select aria-label="Selection filter" bind:value={selection}>
        <option>Geometry</option><option>Features</option><option>Datums</option><option>Quilts</option>
      </select>
      <span><i class="arrow"></i></span>
    </label>
  </footer>
</div>

<style>
  :global(body) { margin: 0; }
  .app { min-height: 100vh; display: flex; flex-direction: column; background: #fafbfc; color: #4d4d4d; font: 14px/20px "Noto Sans", "Open Sans", sans-serif; }
  .app * { box-sizing: border-box; }
  button { border: 0; padding: 0; background: none; font: inherit; color: inherit; display: flex; align-items: center; white-space: nowrap; }
  .icon { width: 20px; height: 20px; flex: none; display: block; }
  .arrow { width: 0; height: 0; flex: none; border: 4px solid transparent; border-top: 5px solid #666; border-bottom: 0; }

  .title { height: 29px; display: grid; grid-template-columns: 1fr auto 1fr; background: #d9dddd; border-bottom: 1px solid #e8ecec; }
  .brand { display: flex; align-items: center; width: 105px; padding-left: 14px; gap: 7px; border-right: 1px solid #a9adad; color: #686b6c; font: 700 23px/26px Lato, sans-serif; }
  .brand span { padding-bottom: 4px; }
  .brand sup { font-size: 8px; line-height: 8px; margin: -8px 0 0 -7px; }
  h1 { margin: 0; font-size: 16px; line-height: 30px; font-weight: 400; color: #4c4f50; }
  .winctl { display: flex; justify-content: flex-end; align-items: center; gap: 17px; padding-right: 8px; }
  .winctl .icon { width: 16px; height: 16px; }

  .menu { height: 35px; display: flex; gap: 2px; background: #3c4243; color: #fff; font-size: 16px; }
  .menu > button { padding: 0 28px; }
  .menu > .file { padding: 0 25px; background: linear-gradient(150deg, #68d143, #55a735); }
  .menu > .current { background: #fafbfc; color: #3f7f2b; margin-left: -2px; }
  .help { margin: 0 8px 5px auto; display: flex; gap: 13px; align-items: center; }
  .help .icon { width: 16px; height: 16px; }
  .help button { gap: 10px; }
  .help .arrow { border-top-color: #fff; }
  .help .q { font-weight: 700; }

  .ribbon { display: flex; border-bottom: 1px solid #b3b9bf; }
  .group { flex: none; padding: 1px 0 0 8px; background: linear-gradient(#aeb8be, #aeb8be) right center / 1px 97% no-repeat; }
  .operations { width: 189px; } .getdata { width: 183px; } .body { width: 174px; } .datum { width: 270px; } .shapes { width: 185px; }
  .engineering { width: 201px; } .editing { width: 317px; } .surfaces { width: 173px; } .intent { width: 111px; }
  .cols { display: grid; column-gap: 10px; height: 102px; }
  .operations .cols { grid-template-columns: 76px 1fr; }
  .datum .cols { grid-template-columns: 40px 145px 52px; }
  .shapes .cols { grid-template-columns: 51px 1fr; }
  .engineering .cols { grid-template-columns: 98px 1fr; }
  .editing .cols { grid-template-columns: 46px 68px 81px 1fr; }
  .surfaces .cols { grid-template-columns: 63px 1fr; }
  .intent .cols { grid-template-columns: 96px; }
  .cmd { height: 34px; gap: 5px; }
  .cmd .arrow { margin-left: 3px; }
  .cmd:disabled { color: #b5b5b5; }
  button:disabled .arrow { border-top-color: #a5a5a5; }
  .bigbtn { flex-direction: column; justify-self: center; padding-top: 6px; }
  .bigbtn svg { width: 38px; height: 38px; margin-bottom: 14px; }
  .bigbtn .arrow { margin-top: 6px; }
  .gname { height: 32px; width: 100%; padding: 4px 8px 0 0; justify-content: center; gap: 5px; }

  .quick { height: 30px; display: flex; align-items: center; gap: 11px; padding-left: 6px; border-bottom: 1px solid #a7b0b8; }
  .quick .icon { width: 19px; height: 19px; }
  .quick .drop { gap: 8px; }
  .quick .more { align-self: stretch; padding-left: 9px; border-left: 1px solid #a9aeb4; }
  .more .arrow { position: relative; }
  .more .arrow::before { content: ""; position: absolute; left: -5px; top: -9px; width: 10px; height: 2px; background: #555; }

  .main { flex: 1; display: flex; min-height: 0; }
  aside { width: 355px; flex: none; border-right: 1px solid #d5d9dc; }
  .sidetabs { display: flex; height: 37px; background: #d6dbdb; }
  .sidetabs button { padding-left: 10px; gap: 8px; }
  .sidetabs .on { background: #fafbfc; padding-right: 13px; }
  .folder .icon, .folder + button .icon { width: 22px; height: 22px; }
  .folder + button { padding-left: 21px; gap: 7px; }
  .sidetabs .folder { gap: 7px; }
  .fade { width: 73px; -webkit-mask-image: linear-gradient(90deg, #000 80%, transparent); mask-image: linear-gradient(90deg, #000 80%, transparent); text-align: left; }
  .sidehead { display: flex; align-items: center; height: 36px; padding: 0 12px 0 35px; gap: 16px; }
  .sidehead h2 { margin: 0 auto 0 0; font-size: 14px; font-weight: 700; }
  .sidehead .icon { width: 22px; height: 24px; }
  .sidehead button { gap: 10px; }
  .filter { display: flex; align-items: center; gap: 5px; padding-left: 13px; }
  .field { display: flex; width: 258px; height: 33px; background: #fff; border: 1px solid #9ba1a6; }
  .field input { flex: 1; min-width: 0; border: 0; outline: 0; padding: 0 6px; background: none; font: inherit; }
  .field button { padding: 0 4px; }
  .field .icon { width: 14px; height: 14px; }
  .filter > button .arrow { margin-left: 2px; }
  .add { margin-left: 8px; }
  .add .icon { width: 15px; height: 15px; }
  ul { list-style: none; margin: 0; padding: 7px 0 0; font-size: 12px; }
  li { display: flex; align-items: center; height: 24px; gap: 6px; padding-left: 20px; }
  li.root { padding-left: 13px; gap: 7px; }
  li.root .icon { width: 18px; height: 18px; }
  li.off { color: #bebebe; }
  .exp, .noexp { width: 12px; height: 12px; }
  .exp { border-left: 9px solid #858585; border-top: 6px solid transparent; border-bottom: 6px solid transparent; }
  hr { margin: 6px 7px 0 10px; border: 0; height: 3px; background: #64b345; }

  main { flex: 1; min-width: 0; display: flex; flex-direction: column; align-items: center; padding-top: 7px; background: #e8eaed; }
  .viewbar { display: flex; gap: 4px; margin-left: 4px; padding: 4px 6px; border: 1px solid #9ba0a8; background: #fafbfc; }
  .viewbar button { width: 28px; height: 28px; justify-content: center; position: relative; }
  .viewbar .on { background: #dcdddd; border: 1px solid #a4a6a8; }
  .menu-mark::after { content: ""; position: absolute; right: 0; bottom: 0; border: 2px solid; border-color: transparent #555 #555 transparent; }
  .scene { flex: 1; width: 100%; min-height: 0; display: block; }
  .mark { font: 69px "Liberation Serif", serif; fill: #f3f4f2; filter: drop-shadow(2px 2px 0 #5a5c60); }
  .cjk { font: 300 79px "Noto Sans CJK SC", sans-serif; }

  footer { height: 43px; display: flex; align-items: flex-end; border-top: 1px solid #a7b0b8; padding-left: 7px; }
  .st { width: 26px; height: 27px; justify-content: center; margin-right: 4px; }
  .st.on { background: #dedfdf; border: 1px solid #b5b5b5; }
  .bar { width: 1px; height: 27px; background: #b5b5b5; margin-left: 6px; }
  .grip { align-self: flex-start; width: 1px; height: 37px; margin: 4px 4px 0 auto; background: #b0b0b0; }
  .find { align-self: flex-start; display: flex; height: 37px; margin: 4px 119px 0 0; padding: 3px 2px; border: solid #b0b0b0; border-width: 0 1px; }
  .find button { width: 34px; height: 30px; justify-content: center; border: 1px solid #b5b5b5; }
  .find .fa { width: 18px; border-left: 0; }
  .sel { align-self: flex-start; display: flex; width: 218px; height: 28px; margin: 9px 16px 0 0; border: 1px solid #9ba1a6; }
  select { flex: 1; appearance: none; border: 0; background: none; padding: 0 8px; font: inherit; color: inherit; }
  .sel span { width: 20px; display: flex; align-items: center; justify-content: center; border-left: 1px solid #9ba1a6; pointer-events: none; }
</style>
